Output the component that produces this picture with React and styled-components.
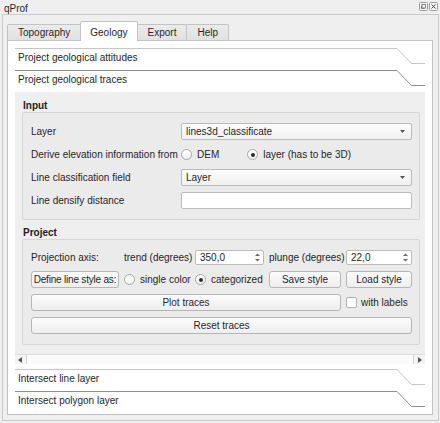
import React from 'react';
import styled, { createGlobalStyle } from 'styled-components';

const Global = createGlobalStyle`
  html, body { margin: 0; padding: 0; background: #efefef; }
  body {
    font-family: "Liberation Sans", Arial, sans-serif;
    font-size: 10px;
    color: #262626;
  }
  * { box-sizing: border-box; }
`;

const Window = styled.div`
  width: 440px;
  height: 423px;
  display: flex;
  flex-direction: column;
  background: #efefef;
  overflow: hidden;
`;

const TitleBar = styled.div`
  height: 14px;
  display: flex;
  align-items: center;
  justify-content: space-between;
  padding: 2px 2px 0 4px;
`;

const TitleText = styled.span`
  font-size: 10px;
  line-height: 13px;
  color: #2a2a2a;
`;

const TitleButtons = styled.div`
  display: flex;
  gap: 1px;
  margin-top: -3px;
`;

const Dock = styled.div`
  flex: 1;
  display: flex;
  flex-direction: column;
  margin: 0 1px 2px 2px;
  border: 1px solid #cbcbcb;
  padding: 6px 5px 5px 4px;
  min-height: 0;
`;

const TabBar = styled.div`
  height: 20px;
  display: flex;
  align-items: flex-end;
  margin-bottom: -1px;
  position: relative;
  z-index: 1;
`;

const Tab = styled.div`
  height: ${p => (p.$active ? '20px' : '16px')};
  margin-bottom: ${p => (p.$active ? '0' : '1px')};
  margin-left: ${p => (p.$first ? '0' : '-1px')};
  padding: ${p => (p.$active ? '2px 9px 0' : '0 10px')};
  display: flex;
  align-items: center;
  border: 1px solid #c3c3c3;
  border-bottom: none;
  border-radius: 2px 2px 0 0;
  background: ${p => (p.$active ? '#ffffff' : 'linear-gradient(#ebebeb, #e1e1e1)')};
  color: #262626;
  white-space: nowrap;
`;

const Pane = styled.div`
  flex: 1;
  display: flex;
  flex-direction: column;
  background: #ffffff;
  border: 1px solid #c3c3c3;
  padding: 7px 7px 1px 7px;
  min-height: 0;
`;

const PageHeader = styled.div`
  height: 22px;
  display: flex;
  flex-shrink: 0;
`;

const HeaderLabel = styled.div`
  flex: 1;
  border-top: 1px solid ${p => (p.$dark ? '#8f8f8f' : '#c6c6c6')};
  padding: 2px 0 0 3px;
  line-height: 14px;
  color: #262626;
  white-space: nowrap;
`;

const HeaderTail = ({ dark }) => (
  <svg width="28" height="22" viewBox="0 0 28 22" style={{ display: 'block', flexShrink: 0 }}>
    <path d="M0 0.5 L14.5 15.5 L28 15.5" fill="none" stroke={dark ? '#8f8f8f' : '#c6c6c6'} strokeWidth="1" />
  </svg>
);

const ScrollArea = styled.div`
  flex: 1;
  display: flex;
  flex-direction: column;
  margin-bottom: 5px;
  background: #efefef;
  min-height: 0;
`;

const Viewport = styled.div`
  flex: 1;
  overflow: hidden;
  padding: 7px 0 0 7px;
  min-height: 0;
`;

const Group = styled.div`
  width: 398px;
  margin-top: ${p => p.$gap || 0}px;
`;

const GroupTitle = styled.div`
  height: 13px;
  line-height: 13px;
  font-weight: bold;
  padding-left: 1px;
  color: #222;
`;

const GroupFrame = styled.div`
  border: 1px solid #d6d6d6;
  border-radius: 2px;
  background: #ebebeb;
  padding: 10px 7px 10px 8px;
`;

const FormGrid = styled.div`
  display: grid;
  grid-template-columns: 150px 1fr;
  grid-auto-rows: 17px;
  row-gap: 6px;
  align-items: center;
`;

const ProjectGrid = styled.div`
  display: grid;
  grid-template-columns: 88px 66px 69px 72px 1fr;
  grid-template-rows: 15px 17px 17px 17px;
  column-gap: 5px;
  row-gap: 6px;
  align-items: center;
`;

const Label = styled.span`
  white-space: nowrap;
  color: #262626;
  grid-column: ${p => p.$col || 'auto'};
`;

const ComboBox = styled.div`
  height: 17px;
  display: flex;
  align-items: center;
  justify-content: space-between;
  padding: 0 6px 0 4px;
  border: 1px solid #b9b9b9;
  border-radius: 2px;
  background: linear-gradient(#fdfdfd, #f0f0f0);
  color: #262626;
`;

const DownArrow = () => (
  <svg width="5" height="3" viewBox="0 0 5 3" style={{ display: 'block' }}>
    <path d="M0 0 L5 0 L2.5 3 Z" fill="#555" />
  </svg>
);

const LineEdit = styled.div`
  height: 17px;
  border: 1px solid #bcbcbc;
  border-radius: 2px;
  background: #ffffff;
`;

const RadioRow = styled.div`
  display: flex;
  align-items: center;
  gap: ${p => p.$gap || 0}px;
`;

const Choice = styled.label`
  display: flex;
  align-items: center;
  gap: ${p => p.$gap || 5}px;
  white-space: nowrap;
  grid-column: ${p => p.$col || 'auto'};
`;

const Radio = styled.span`
  width: 11px;
  height: 11px;
  border-radius: 50%;
  border: 1px solid #a9a9a9;
  background: linear-gradient(#ffffff, #f1f1f1);
  display: flex;
  align-items: center;
  justify-content: center;
  flex-shrink: 0;
  &::after {
    content: '';
    width: 4px;
    height: 4px;
    border-radius: 50%;
    background: ${p => (p.$checked ? '#2b2b2b' : 'transparent')};
  }
`;

const CheckBox = styled.span`
  width: 11px;
  height: 11px;
  border-radius: 2px;
  border: 1px solid #b0b0b0;
  background: #ffffff;
  flex-shrink: 0;
`;

const Button = styled.div`
  height: 17px;
  display: flex;
  align-items: center;
  justify-content: center;
  border: 1px solid #b6b6b6;
  border-radius: 3px;
  background: linear-gradient(#fbfbfb, #eeeeee);
  color: #262626;
  white-space: nowrap;
  letter-spacing: ${p => (p.$tight ? '-0.2px' : 'normal')};
  grid-column: ${p => p.$col || 'auto'};
`;

const SpinBox = styled.div`
  height: 15px;
  display: flex;
  align-items: center;
  justify-content: space-between;
  padding: 0 2px 0 4px;
  border: 1px solid #bcbcbc;
  border-radius: 2px;
  background: #ffffff;
  color: #262626;
`;

const SpinArrows = () => (
  <svg width="7" height="11" viewBox="0 0 7 11" style={{ display: 'block' }}>
    <path d="M1 4 L6 4 L3.5 1.5 Z" fill="#6a6a6a" />
    <path d="M1 7 L6 7 L3.5 9.5 Z" fill="#6a6a6a" />
  </svg>
);

const ScrollBar = styled.div`
  height: 10px;
  display: flex;
  background: #f3f3f3;
  border-top: 1px solid #dedede;
  flex-shrink: 0;
`;

const ScrollButton = styled.div`
  width: 10px;
  display: flex;
  align-items: center;
  justify-content: center;
`;

const ScrollHandle = styled.div`
  flex: 1;
  margin: 0 1px;
  background: #fafafa;
  border-left: 1px solid #d3d3d3;
  border-right: 1px solid #d3d3d3;
`;

const ArrowLR = ({ dir }) => (
  <svg width="4" height="6" viewBox="0 0 4 6" style={{ display: 'block' }}>
    <path d={dir === 'left' ? 'M4 0 L4 6 L0 3 Z' : 'M0 0 L0 6 L4 3 Z'} fill="#555" />
  </svg>
);

const FloatIcon = () => (
  <svg width="9" height="9" viewBox="0 0 9 9" style={{ display: 'block' }}>
    <rect x="0.5" y="0.5" width="8" height="8" rx="1" fill="#f3f3f3" stroke="#9c9c9c" />
    <rect x="3" y="2.5" width="3.5" height="3.5" fill="none" stroke="#6f6f6f" strokeWidth="0.8" />
    <path d="M2.5 3.5 L2.5 6.5 L5.5 6.5" fill="none" stroke="#6f6f6f" strokeWidth="0.8" />
  </svg>
);

const CloseIcon = () => (
  <svg width="9" height="9" viewBox="0 0 9 9" style={{ display: 'block' }}>
    <rect x="0.5" y="0.5" width="8" height="8" rx="1" fill="#f3f3f3" stroke="#9c9c9c" />
    <path d="M2.5 2.5 L6.5 6.5 M6.5 2.5 L2.5 6.5" stroke="#444" strokeWidth="1" />
  </svg>
);

const tabs = ['Topography', 'Geology', 'Export', 'Help'];

export default function App() {
  return (
    <>
      <Global />
      <Window>
        <TitleBar>
          <TitleText>qProf</TitleText>
          <TitleButtons>
            <FloatIcon />
            <CloseIcon />
          </TitleButtons>
        </TitleBar>
        <Dock>
          <TabBar>
            {tabs.map((t, i) => (
              <Tab key={t} $first={i === 0} $active={t === 'Geology'}>{t}</Tab>
            ))}
          </TabBar>
          <Pane>
            <PageHeader>
              <HeaderLabel>Project geological attitudes</HeaderLabel>
              <HeaderTail />
            </PageHeader>
            <PageHeader>
              <HeaderLabel $dark>Project geological traces</HeaderLabel>
              <HeaderTail dark />
            </PageHeader>
            <ScrollArea>
              <Viewport>
                <Group>
                  <GroupTitle>Input</GroupTitle>
                  <GroupFrame>
                    <FormGrid>
                      <Label>Layer</Label>
                      <ComboBox>lines3d_classificate<DownArrow /></ComboBox>
                      <Label>Derive elevation information from</Label>
                      <RadioRow $gap={28}>
                        <Choice><Radio />DEM</Choice>
                        <Choice><Radio $checked />layer (has to be 3D)</Choice>
                      </RadioRow>
                      <Label>Line classification field</Label>
                      <ComboBox>Layer<DownArrow /></ComboBox>
                      <Label>Line densify distance</Label>
                      <LineEdit />
                    </FormGrid>
                  </GroupFrame>
                </Group>
                <Group $gap={6}>
                  <GroupTitle>Project</GroupTitle>
                  <GroupFrame>
                    <ProjectGrid>
                      <Label>Projection axis:</Label>
                      <Label>trend (degrees)</Label>
                      <SpinBox>350,0<SpinArrows /></SpinBox>
                      <Label>plunge (degrees)</Label>
                      <SpinBox>22,0<SpinArrows /></SpinBox>

                      <Button $tight>Define line style as:</Button>
                      <Choice><Radio />single color</Choice>
                      <Choice><Radio $checked />categorized</Choice>
                      <Button>Save style</Button>
                      <Button>Load style</Button>

                      <Button $col="1 / 5">Plot traces</Button>
                      <Choice $gap={4}><CheckBox />with labels</Choice>

                      <Button $col="1 / 6">Reset traces</Button>
                    </ProjectGrid>
                  </GroupFrame>
                </Group>
              </Viewport>
              <ScrollBar>
                <ScrollButton><ArrowLR dir="left" /></ScrollButton>
                <ScrollHandle />
                <ScrollButton><ArrowLR dir="right" /></ScrollButton>
              </ScrollBar>
            </ScrollArea>
            <PageHeader>
              <HeaderLabel>Intersect line layer</HeaderLabel>
              <HeaderTail />
            </PageHeader>
            <PageHeader>
              <HeaderLabel $dark>Intersect polygon layer</HeaderLabel>
              <HeaderTail dark />
            </PageHeader>
          </Pane>
        </Dock>
      </Window>
    </>
  );
}
